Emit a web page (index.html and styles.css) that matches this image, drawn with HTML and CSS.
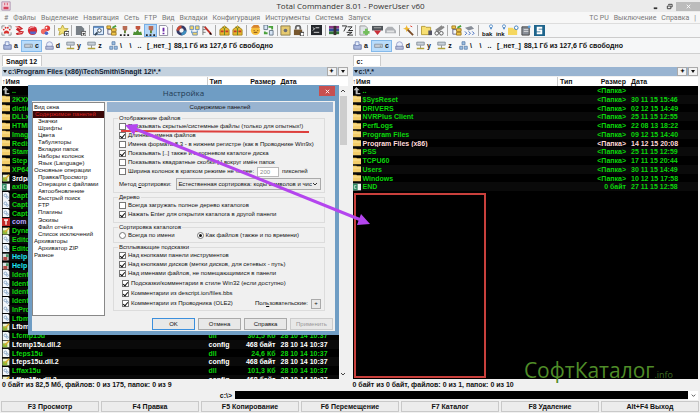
FILE: index.html
```html
<!DOCTYPE html>
<html lang="ru">
<head>
<meta charset="utf-8">
<title>Total Commander 8.01 - PowerUser v60</title>
<link rel="stylesheet" href="styles.css">
</head>
<body>
<svg class="defs" aria-hidden="true">
  <symbol id="paw" viewBox="0 0 12 12"><path d="M1 4V1h3M8 1h3v3M11 8v3H8M4 11H1V8" fill="none" stroke="#888"/><path d="M3 9c0-2 1.500-3 3-3s3 1 3 3c-1 1-2 0-3 0s-2 1-3 0z" fill="#d8312e"/><circle cx="3" cy="5" r="1" fill="#d8312e"/><circle cx="5" cy="3" r="1" fill="#d8312e"/><circle cx="7.500" cy="3" r="1" fill="#d8312e"/><circle cx="9.500" cy="5" r="1" fill="#d8312e"/></symbol>
  <symbol id="ribbon" viewBox="0 0 12 12"><path d="M1 2l5-1 4 3-4 2 5 1-2 3-6 1-1-2 4-1-4-3 2-2z" fill="#c8262c"/><path d="M3 2l4 2M5 9l4-1" stroke="#ffb0a8"/></symbol>
  <symbol id="ball" viewBox="0 0 12 12"><circle cx="6" cy="6" r="5" fill="#d62b35"/><path d="M3 7h7l-1 3H4z" fill="#5566c8"/><path d="M3 4c1-2 3-2 5-2" stroke="#fff" fill="none"/></symbol>
  <symbol id="pills" viewBox="0 0 12 12"><circle cx="8" cy="3.500" r="3" fill="#e23b3b"/><circle cx="4" cy="7" r="3" fill="#ef6a62"/><circle cx="7" cy="9" r="2" fill="#4d63c9"/><circle cx="7" cy="3" r="1" fill="#fff"/></symbol>
  <symbol id="star" viewBox="0 0 12 12"><path d="M5 0l2 4 4 0-3 3 1 4-4-2-4 2 1-4-3-3h4z" fill="#f5e37a" stroke="#b7a640"/><path d="M7 7h5v5H7z" fill="#fff" stroke="#333"/><path d="M8 9h3l-1.500 2z" fill="#222"/></symbol>
  <symbol id="doc" viewBox="0 0 12 12"><path d="M1 1h6l3 3v7H1z" fill="#777f86"/><path d="M7 7h5v5H7z" fill="#eee" stroke="#555"/><path d="M8 9h3l-1.500 2z"/></symbol>
  <symbol id="view" viewBox="0 0 12 12"><path d="M.500 1.500h11v9H.500z" fill="#dcecff" stroke="#4c6b93"/><path d="M1 2h10v1H1z" fill="#3b78c4"/><circle cx="7" cy="6" r="2" fill="#fff" stroke="#345"/><path d="M5 8l-3 3" stroke="#345" stroke-width="2"/></symbol>
  <symbol id="tree" viewBox="0 0 12 12"><path d="M2 3v7h5M2 5h5" fill="none" stroke="#668"/><path d="M1 1h4v3H1zM6 4h5v3H6zM6 8h5v3H6z" fill="#f1c84b" stroke="#a37c20"/><path d="M7 3l4-2" stroke="#4a9f3a" stroke-width="2"/></symbol>
  <symbol id="plug" viewBox="0 0 12 12"><path d="M4 1h5v4l-2 2-3-2z" fill="#b86c55"/><path d="M6.500 6v3" stroke="#5b7f31" stroke-width="2"/><path d="M1 11h2M5 11h2M9 11h2" stroke="#222" stroke-width="2"/></symbol>
  <symbol id="people" viewBox="0 0 12 12"><path d="M4 1h5v3l-2 2-3-2z" fill="#c2553f"/><path d="M1 11l1-4 2 1 2-3 2 3 2-1 1 4z" fill="#4c8f32"/></symbol>
  <symbol id="note" viewBox="0 0 12 12"><path d="M1.500.500h7l2 2v9h-9z" fill="#fff" stroke="#889"/><path d="M6 3v4M6 8.500v1.500" stroke="#6a28a8" stroke-width="2"/></symbol>
  <symbol id="wheel" viewBox="0 0 12 12"><circle cx="6" cy="6" r="4" fill="none" stroke="#333a66" stroke-width="3"/><path d="M2 6a4 4 0 0 1 4-4" fill="none" stroke="#cc4a34" stroke-width="3"/><path d="M10 6a4 4 0 0 1-4 4" fill="none" stroke="#3c8fc0" stroke-width="3"/></symbol>
  <symbol id="sync" viewBox="0 0 12 12"><path d="M1 1h4v4H1zM7 1h4v4H7zM4 8h5v3H4z" fill="#f2d568" stroke="#6d8fb5"/><path d="M3 6v3M9 6v2" stroke="#3481c8"/></symbol>
  <symbol id="pen" viewBox="0 0 12 12"><path d="M1 1v10M1 2h3M1 5h3M1 8h3" stroke="#777" fill="none"/><path d="M3 2l7 8" stroke="#c02f26" stroke-width="2"/><path d="M9 8l2 3-3-1z"/></symbol>
  <symbol id="pack" viewBox="0 0 12 12"><path d="M1 5l5-4 5 4v6H1z" fill="#e6b62d" stroke="#a8841f"/><path d="M4 2l2 2 2-2M6 4v7" stroke="#578631" fill="none"/><path d="M2 6h3v2H2zM7 6h3v2H7z" fill="#c23c2c"/></symbol>
  <symbol id="face" viewBox="0 0 12 12"><circle cx="6" cy="6" r="5" fill="#f5bd3b"/><path d="M1 3h10l-2-3H4z" fill="#d6842e"/><path d="M4 6h1M8 6h1M4 8h4" stroke="#734610"/></symbol>
  <symbol id="swap" viewBox="0 0 12 12"><path d="M1 0h4v5H1zM7 6h4v5H7z" fill="#d7e5f6" stroke="#678"/><path d="M6 2h4v3M5 9H2V7" fill="none" stroke="#49a13a" stroke-width="2"/></symbol>
  <symbol id="safe" viewBox="0 0 12 12"><path d="M1 1h10v10H1z" fill="#e6ca70" stroke="#8b7b4a"/><circle cx="6" cy="6" r="2" fill="#6b6c74"/></symbol>
  <symbol id="lock" viewBox="0 0 12 12"><path d="M3 5V3c0-3 5-3 5 0v2" fill="none" stroke="#666" stroke-width="2"/><path d="M1 5h9v6H1z" fill="#77572e"/><path d="M8 8h4v4H8z" fill="#fff" stroke="#333"/></symbol>
  <symbol id="term" viewBox="0 0 12 12"><path d="M0 0h12v11H0z" fill="#25282c"/><path d="M2 3l2 1-2 2M5 3h4M3 8h6" stroke="#ddd" fill="none"/></symbol>
  <symbol id="rar" viewBox="0 0 12 12"><path d="M0 1h11v3H0z" fill="#8b3a83"/><path d="M0 4h11v3H0z" fill="#344d9c"/><path d="M0 7h11v3H0z" fill="#34763a"/><path d="M5 1v10h3V1z" fill="#392f31"/></symbol>
  <symbol id="seven" viewBox="0 0 12 12"><path d="M0 1h5L2 7M6 2h5L7 6h5M5 8h6l-5 3h6" fill="none" stroke="#222"/></symbol>
  <symbol id="plus" viewBox="0 0 12 12"><path d="M1 1h6l2 2v8H1z" fill="#dfe3e6" stroke="#999"/><path d="M8 4v7M4.500 8h7" stroke="#73bd5c" stroke-width="3"/></symbol>
  <symbol id="down" viewBox="0 0 12 12"><path d="M0 1h12v5H0z" fill="#50555a"/><path d="M2 6h8l-4 5z" fill="#c92e37"/><path d="M2 3h8" stroke="#aaa"/></symbol>
  <symbol id="cloud" viewBox="0 0 12 12"><path d="M0 9V5l3-3h5l4 4v3z" fill="#aeb1b5"/><path d="M2 6h8v2H2z" fill="#e2e3e4"/></symbol>
  <symbol id="wand" viewBox="0 0 12 12"><path d="M3 3l8 8" stroke="#7a4c27" stroke-width="2"/><path d="M4 0l1 3 3 1-3 1-1 3-1-3-3-1 3-1z" fill="#efb72f"/><path d="M8 1l2 1" stroke="#d32"/></symbol>
  <symbol id="folder" viewBox="0 0 12 12"><path d="M0 1h5l1 1h6v9H0z" fill="#f3cd6a"/><path d="M0 4h12v1H0z" fill="#fff0b0"/></symbol>
  <symbol id="foldplus" viewBox="0 0 12 12"><path d="M.500 1.500h4l1 1h5v8h-10z" fill="#f7df72" stroke="#b59a33"/><path d="M8 6h4v5H8z" fill="#556" /></symbol>
  <symbol id="find" viewBox="0 0 12 12"><path d="M2 6l7-5M4 7l7-5" stroke="#888" stroke-width="2"/><circle cx="3" cy="9" r="2" fill="none" stroke="#555"/><circle cx="8" cy="9" r="2" fill="none" stroke="#555"/></symbol>
  <symbol id="arrows" viewBox="0 0 12 12"><path d="M1 3l7-2 3 3-6 2z" fill="#888e98"/><path d="M1 7l2 2-2 2M5 7l2 2-2 2M9 7l2 2-2 2" stroke="#3a66bd" fill="none"/></symbol>
  <symbol id="badge" viewBox="0 0 12 12"><circle cx="8" cy="3" r="2" fill="#fff" stroke="#3779bd"/><path d="M8 5v2" stroke="#3779bd" stroke-width="2"/></symbol>
  <symbol id="foldkey" viewBox="0 0 12 12"><path d="M0 3h5l1 1h4v7H0z" fill="#f5d75f"/><circle cx="9" cy="3" r="2" fill="#fff" stroke="#3779bd"/></symbol>
  <symbol id="note2" viewBox="0 0 12 12"><path d="M1 2h8v9H1z" fill="#8a9099" stroke="#444"/><path d="M3 5h5M3 7h5" stroke="#ddd"/><circle cx="9" cy="2" r="1.500" fill="#5aa0e0"/></symbol>
  <symbol id="snag" viewBox="0 0 12 12"><path d="M0 0h12v12H0z" fill="#1d648c"/><path d="M9 3H4v3h4v3H3" fill="none" stroke="#fff" stroke-width="2"/></symbol>
  <symbol id="floppy" viewBox="0 0 12 12"><path d="M1 5h10v6H1z" fill="#aab8de" stroke="#5c6b9c"/><path d="M3 1h5v5H3z" fill="#e8eefa" stroke="#6a7fb5"/></symbol>
  <symbol id="hdd" viewBox="0 0 14 12"><path d="M1 4h12v5H1z" fill="#c7ccd3" stroke="#76808d"/><path d="M9 7h2" stroke="#477"/></symbol>
  <symbol id="cd" viewBox="0 0 12 12"><circle cx="6" cy="5" r="4" fill="#e9eefc" stroke="#8791c0"/><path d="M1 7h10v4H1z" fill="#b9c0dc" stroke="#6c77a6"/></symbol>
  <symbol id="net" viewBox="0 0 12 12"><path d="M1 1.500h10v4H1z" fill="#c9d0d8" stroke="#77828e"/><path d="M6 6v4" stroke="#777"/><path d="M1 10h10" stroke="#b3a33c" stroke-width="2"/></symbol>
  <symbol id="lan" viewBox="0 0 12 12"><path d="M4 1h4v4H4zM1 7h4v4H1zM7 7h4v4H7z" fill="#9dbfe2" stroke="#557ca8"/></symbol>
  <symbol id="up" viewBox="0 0 12 12"><path d="M5 0l5 5H7v4h4v2H4V5H1z" fill="#bbb"/></symbol>
  <symbol id="dll" viewBox="0 0 12 12"><path d="M1 0h8l2 2v10H1z" fill="#f2f6fa"/><circle cx="5" cy="5" r="2" fill="none" stroke="#6890b8"/><circle cx="8" cy="8" r="1.500" fill="none" stroke="#6890b8"/></symbol>
  <symbol id="cfg" viewBox="0 0 12 12"><path d="M1 1h10v10H1z" fill="#eef2d0"/><path d="M1 5h7v6H1z" fill="#8bb83a"/><path d="M4 8l7-7" stroke="#dca92c" stroke-width="2"/></symbol>
  <symbol id="exe" viewBox="0 0 12 12"><path d="M0 1h12v10H0z" fill="#f5f5f5"/><path d="M0 1h7v10H0z" fill="#2f8a62"/><path d="M5 4H2v4h3" stroke="#fff" fill="none"/></symbol>
  <symbol id="tt" viewBox="0 0 12 12"><path d="M0 0h12v12H0z" fill="#c22a2a"/><path d="M3 3h6M6 3v7" stroke="#fff" stroke-width="2"/></symbol>
  <symbol id="hlp" viewBox="0 0 12 12"><path d="M1 1h9v10H1z" fill="#d9dfe0"/><path d="M2 6h6v5H2z" fill="#b24b45"/><path d="M6 2h4v4H6z" fill="#4c9a6a"/></symbol>
</svg>

<div class="app">
  <header class="titlebar">
    <svg class="logo" viewBox="0 0 12 12"><path d="M1 1h10v10H1z" fill="#f4d5dc" stroke="#a88fae"/><path d="M3 7h6v3H3zM4 2h1v3H4zM7 2h1v3H7z" fill="#d4405c"/></svg>
    <h1>Total Commander 8.01 - PowerUser v60</h1>
    <div class="winbtns">
      <button aria-label="Свернуть"><svg viewBox="0 0 8 8"><path d="M2 6h4" stroke="#333" stroke-width="2"/></svg></button>
      <button aria-label="Развернуть"><svg viewBox="0 0 8 8"><path d="M1.500 3.500h4v3h-4zM3 2.500V1.500h4v3H6" fill="none" stroke="#333"/></svg></button>
      <button class="x" aria-label="Закрыть"><svg viewBox="0 0 8 8"><path d="M2 2l4 4M6 2L2 6" stroke="#fff"/></svg></button>
    </div>
  </header>
  <nav class="menu">
    <a href="#">#</a><a href="#">Файлы</a><a href="#">Выделение</a><a href="#">Навигация</a><a href="#">Сеть</a><a href="#">FTP</a><a href="#">Вид</a><a href="#">Вкладки</a><a href="#">Конфигурация</a><a href="#">Инструменты</a><a href="#">Система</a><a href="#">Запуск</a>
    <span class="fill"></span>
    <a href="#">TC PU</a><a href="#">Выключение</a><a href="#">Справка</a><span>|</span>
  </nav>
  <div class="toolbar"><div class="tools" id="tools"></div></div>
  <div class="drives">
    <div class="drivebar"></div>
    <div class="drivebar"></div>
  </div>
  <main class="panels">
    <section class="panel">
      <div class="tabs"><button class="tab">Snagit 12</button></div>
      <div class="path"><b><i class="tri"></i>c:\Program Files (x86)\TechSmith\Snagit 12\*.*</b><button aria-label="Избранное">✦</button><button aria-label="История"><i class="tri"></i></button></div>
      <div class="files">
        <table>
          <thead><tr><th><i class="arr">↑</i>Имя</th><th>Тип</th><th>Размер</th><th>Дата</th></tr></thead>
          <tbody id="left"></tbody>
        </table>
        <div class="scroll"><svg viewBox="0 0 8 8"><path d="M2 5l2-2 2 2" fill="none" stroke="#444"/></svg><i></i><svg viewBox="0 0 8 8"><path d="M2 3l2 2 2-2" fill="none" stroke="#444"/></svg></div>
      </div>
      <p class="status">0 байт из 82,5 Мб, файлов: 0 из 175, папок: 0 из 9</p>
    </section>
    <section class="panel">
      <div class="tabs"><button class="tab">c:</button></div>
      <div class="path active"><b><i class="tri"></i>c:\*.*</b><button aria-label="Избранное">✦</button><button aria-label="История"><i class="tri"></i></button></div>
      <div class="files">
        <table>
          <thead><tr><th><i class="arr">↑</i>Имя</th><th>Тип</th><th>Размер</th><th>Дата</th></tr></thead>
          <tbody id="right"></tbody>
        </table>
        <div class="frame"></div>
      </div>
      <p class="status">0 байт из 0 байт, файлов: 0 из 1, папок: 0 из 10</p>
    </section>
  </main>
  <div class="cmd"><label for="cmd">c:\&gt;</label><input id="cmd"><button aria-label="Список команд"><svg viewBox="0 0 8 8"><path d="M2 3l2 2 2-2" fill="none" stroke="#444"/></svg></button></div>
  <footer class="keys"><button>F3 Просмотр</button><button>F4 Правка</button><button>F5 Копирование</button><button>F6 Перемещение</button><button>F7 Каталог</button><button>F8 Удаление</button><button>Alt+F4 Выход</button></footer>
</div>

<div class="dialog" role="dialog" aria-labelledby="dt">
  <div class="dtitle"><h2 id="dt">Настройка</h2><button aria-label="Закрыть"><svg viewBox="0 0 8 8"><path d="M2 2l4 4M6 2L2 6" stroke="#fff"/></svg></button></div>
  <div class="dbody">
    <div class="dmain">
      <ul class="pages">
        <li>Вид окна</li><li class="on sub">Содержимое панелей</li><li class="sub">Значки</li><li class="sub">Шрифты</li><li class="sub">Цвета</li><li class="sub">Табуляторы</li><li class="sub">Вкладки папок</li><li class="sub">Наборы колонок</li><li class="sub">Язык (Language)</li><li>Основные операции</li><li class="sub">Правка/Просмотр</li><li class="sub">Операции с файлами</li><li class="sub">Автообновление</li><li class="sub">Быстрый поиск</li><li class="sub">FTP</li><li class="sub">Плагины</li><li class="sub">Эскизы</li><li class="sub">Файл отчёта</li><li class="sub">Список исключений</li><li>Архиваторы</li><li class="sub">Архиватор ZIP</li><li>Разное</li>
      </ul>
      <div class="opts">
        <h3>Содержимое панелей</h3>
        <fieldset>
          <legend>Отображение файлов</legend>
          <label><input type="checkbox">Показывать скрытые/системные файлы (только для опытных!)</label>
          <label><input type="checkbox" checked>Длинные имена файлов</label>
          <label><input type="checkbox">Имена формата 8.3 - в нижнем регистре (как в Проводнике Win9x)</label>
          <label><input type="checkbox" checked>Показывать [..] также и в корневом каталоге диска</label>
          <label><input type="checkbox">Показывать квадратные скобки [ ] вокруг имён папок</label>
          <div class="line"><label><input type="checkbox">Ширина колонок в кратком режиме не более:</label><input class="num" aria-label="Пикселей" value="200" disabled><span>пикселей</span></div>
          <div class="method"><label for="sort">Метод <u>с</u>ортировки:</label><div class="pick"><select id="sort"><option>Естественная сортировка: коды символов и чис</option></select><svg viewBox="0 0 8 8"><path d="M2 3l2 2 2-2" fill="none" stroke="#333"/></svg></div></div>
        </fieldset>
        <fieldset class="tree">
          <legend>Дерево</legend>
          <label><input type="checkbox">Всегда загружать полное дерево каталогов</label>
          <label><input type="checkbox" checked>Нажать Enter для открытия каталога в другой панели</label>
        </fieldset>
        <fieldset>
          <legend>Сортировка каталогов</legend>
          <div class="radios"><label><input type="radio" name="s">Всегда по имени</label><label><input type="radio" name="s" checked>Как файлов (также и по времени)</label></div>
        </fieldset>
        <fieldset class="hints">
          <legend>Всплывающие подсказки</legend>
          <label><input type="checkbox" checked>Над кнопками панели инструментов</label>
          <label><input type="checkbox" checked>Над кнопками дисков (метки дисков, для сетевых - путь)</label>
          <label><input type="checkbox" checked>Над именами файлов, не помещающимися в панели</label>
          <div class="nested">
            <label><input type="checkbox" checked>Подсказки/комментарии в стиле Win32 (если доступно)</label>
            <label><input type="checkbox" checked>Комментарии из descript.ion/files.bbs</label>
            <div class="line last"><label><input type="checkbox" checked>Комментарии из Проводника (OLE2)</label><span>Пол<u>ь</u>зовательские:</span><button aria-label="Пользовательские">+</button></div>
          </div>
        </fieldset>
      </div>
    </div>
    <div class="dbtns"><button class="ok">OK</button><button>Отмена</button><button>Справка</button><button disabled>Применить</button></div>
  </div>
</div>

<svg class="marks" viewBox="0 0 700 413" aria-hidden="true">
  <path d="M121 131L309 132" stroke="#dd3f3c" stroke-width="2"/>
  <path d="M133 128L361 220" stroke="#b445ee" stroke-width="3"/>
  <path d="M125 125l13-1-4 11zM370 224l-13 1 4-11z" fill="#b445ee"/>
</svg>
<div class="brand">СофтКаталог<small>.info</small></div>
<script src="app.js"></script>
</body>
</html>
```
FILE: styles.css
```css
* { box-sizing: border-box; }
body { margin: 0; height: 100vh; overflow: hidden; position: relative; background: #f0f0f0; color: #111; font: bold 7px/9px "Liberation Sans", sans-serif; }
button, input, select { font: inherit; color: inherit; margin: 0; padding: 0; }
button { border: 0; background: none; display: flex; align-items: center; justify-content: center; }
h1, h2, h3, p, ul { margin: 0; padding: 0; list-style: none; }
a { color: inherit; text-decoration: none; }
svg { display: block; }
.defs { position: absolute; width: 0; height: 0; }
.app { height: 100%; display: flex; flex-direction: column; }

.titlebar { height: 12px; display: flex; align-items: center; background: #ebebeb; padding-left: 1px; }
.logo { width: 10px; height: 10px; }
.titlebar h1 { flex: 1; text-align: center; padding-left: 42px; font: 8px/12px "Open Sans", sans-serif; color: #333; }
.winbtns { display: flex; }
.winbtns button { width: 14px; height: 9px; }
.winbtns svg { width: 7px; height: 7px; }
.winbtns .x { width: 24px; background: #bcbcbc; }
.menu { height: 11px; display: flex; gap: 5px; align-items: center; padding: 0 4px; background: #f7f7f7; color: #777; font: 7px/10px Roboto, sans-serif; }
.fill { flex: 1; }
.toolbar { height: 15px; background: #f5f6f7; border-top: 1px solid #ddd; border-bottom: 1px solid #ccc; }
.tools { width: 78%; height: 100%; display: flex; justify-content: space-between; align-items: center; }
.tools i { width: 1px; height: 11px; background: #aaa; }
.tools div { display: flex; }
.tools button { width: 13px; height: 13px; position: relative; }
.tools svg { width: 11px; height: 11px; }
.tools .sel { background: #b5d7f8; outline: 1px solid #77aee6; outline-offset: -1px; }
.tools .cap { align-items: flex-end; line-height: 6px; font-size: 6px; }
.tools .cap svg { position: absolute; top: 0; right: 0; width: 9px; height: 9px; }
.drives { height: 16px; display: grid; grid-template-columns: 1fr 1fr; background: #f6f7f8; border-bottom: 1px solid #d0d0d0; }
.drivebar { display: flex; align-items: center; }
.drivebar button { width: 21px; height: 12px; gap: 2px; }
.drivebar button.sel { background: #b9dcfb; outline: 1px solid #84b9ea; outline-offset: -1px; }
.drivebar svg { width: 9px; height: 9px; }
.drivebar button.d { width: 9px; }
.drivebar span { padding-left: 3px; }

.panels { flex: 1; min-height: 0; display: grid; grid-template-columns: 1fr 1fr; gap: 5px; padding: 0 2px; }
.panel { min-width: 0; min-height: 0; display: flex; flex-direction: column; }
.tabs { height: 12px; display: flex; align-items: flex-end; }
.tab { height: 11px; min-width: 28px; padding: 0 4px 0 3px; justify-content: flex-start; background: #fff; border: 1px solid #ccc; border-bottom: 0; }
.path { height: 9px; margin: 1px 0; display: flex; background: #c3d1de; gap: 1px; }
.path.active { background: #99b4d1; }
.path b { flex: 1; display: flex; align-items: center; gap: 1px; color: #123; padding-left: 1px; }
.path button { width: 10px; background: #f3f3f3; border: 1px solid #aaa; font-size: 6px; }
.tri { border: 2px solid transparent; border-top: 3px solid #111; border-bottom: 0; }
.files { flex: 1; min-height: 0; display: grid; grid-template-columns: 1fr; position: relative; background: #000; }
table { min-height: 0; display: flex; flex-direction: column; }
thead { display: block; background: #fff; height: 9px; }
tbody { flex: 1; min-height: 0; overflow: hidden; display: grid; grid-template-rows: repeat(33, 1fr) 4px; color: #0bd60b; }
tr { display: grid; grid-template-columns: 1fr 31px 41px 67px; min-height: 0; overflow: hidden; align-items: center; }
tbody tr:nth-child(34) { align-items: start; }
tbody tr:nth-child(even) { background: #0a0a0a; }
th, td { padding: 0; text-align: left; white-space: nowrap; line-height: 9px; }
th:nth-child(2) { border-left: 1px solid #ccc; padding-left: 2px; margin-left: -2px; }
th:nth-child(3), td:nth-child(3) { text-align: right; padding-right: 5px; }
td:first-child { display: flex; align-items: center; gap: 2px; }
td svg { width: 8px; height: 8px; }
.arr { font-style: normal; }
tr.w { color: #fff; }
tr.p { color: #ffd9d9; }
tr.c { color: #1fe6f2; }
tr.v { color: #b9a8ff; }
.scroll { position: absolute; right: 0; top: 9px; bottom: 0; width: 9px; background: #f0f0f0; display: flex; flex-direction: column; align-items: center; }
.scroll svg { width: 8px; height: 10px; }
.scroll i { width: 7px; height: 49px; background: #cdcdcd; }
.scroll svg:last-child { margin-top: auto; }
.frame { position: absolute; left: 1px; top: 116px; width: 132px; bottom: 1px; border: 2px solid #c9403c; }
.status { height: 11px; line-height: 11px; }
.cmd { height: 11px; display: flex; align-items: center; padding: 0 2px 1px 0; }
.cmd label { width: 235px; text-align: right; padding-right: 3px; }
.cmd input { flex: 1; min-width: 0; height: 8px; border: 0; background: #000; color: #fff; }
.cmd button { width: 10px; height: 9px; background: #fff; }
.cmd svg { width: 7px; height: 7px; }
.keys { height: 12px; display: grid; grid-template-columns: repeat(7, 1fr); gap: 2px; padding: 0 1px 1px; }
.keys button { border: 1px solid #c9c9c9; background: #ececec; }

.dialog { position: absolute; left: 28px; top: 85px; width: 311px; height: 250px; padding: 0 4px 4px; background: #6f9dc4; font: 6px/9px "Liberation Sans", sans-serif; display: flex; flex-direction: column; }
.dtitle { height: 16px; display: flex; align-items: flex-start; }
.dtitle h2 { flex: 1; text-align: center; padding-left: 16px; font: 8px/16px "Open Sans", sans-serif; color: #223a52; }
.dtitle button { width: 16px; height: 10px; margin-top: 1px; background: #c75050; }
.dtitle svg { width: 7px; height: 7px; }
.dbody { flex: 1; min-height: 0; background: #f0f0f0; padding: 1px 2px 1px 0; display: flex; flex-direction: column; gap: 2px; }
.dmain { flex: 1; min-height: 0; display: flex; gap: 2px; }
.pages { width: 73px; background: #fff; border: 1px solid #888; display: grid; grid-template-rows: repeat(30, 1fr); padding-top: 1px; }
.pages li { line-height: 7px; padding-left: 1px; white-space: nowrap; min-height: 0; }
.pages .sub { padding-left: 5px; }
.pages .on { background: #3a0808; color: #d82020; padding-left: 2px; }
.opts { flex: 1; min-width: 0; }
.opts h3 { height: 10px; margin-bottom: 2px; background: #99b4d1; font: inherit; line-height: 10px; text-align: center; }
fieldset { margin: 0 8px 0 6px; padding: 0 3px 2px 5px; min-width: 0; border: 1px solid #dcdcdc; }
fieldset.tree { padding-bottom: 3px; }
legend { padding: 0 1px; margin-left: -1px; line-height: 8px; }
fieldset label { height: 9px; display: flex; align-items: center; gap: 2px; white-space: nowrap; }
input[type="checkbox"], input[type="radio"] { appearance: none; flex: none; width: 7px; height: 7px; border: 1px solid #777; background: #fff; display: grid; place-items: center; }
input[type="radio"] { border-radius: 50%; }
input[type="checkbox"]:checked::before { content: ""; width: 2px; height: 4px; border: solid #111; border-width: 0 1px 1px 0; transform: rotate(40deg); }
input[type="radio"]:checked::before { content: ""; width: 3px; height: 3px; border-radius: 50%; background: #111; }
.line, .method, .radios { display: flex; align-items: center; }
.line { height: 9px; gap: 3px; }
.num { width: 22px; height: 10px; border: 1px solid #bbb; background: #fff; color: #888; padding-left: 2px; }
.method { margin-top: 2px; height: 12px; gap: 5px; }
.method label { gap: 0; white-space: pre; }
.pick { flex: 1; min-width: 0; position: relative; }
.pick select { appearance: none; display: block; width: 100%; height: 12px; border: 1px solid #aaa; border-radius: 0; background: #eaeaea; padding: 0 8px 0 1px; }
.pick svg { position: absolute; right: 2px; top: 2px; width: 8px; height: 8px; pointer-events: none; }
.radios { gap: 22px; }
.nested { display: grid; gap: 1px; padding: 1px 0 0 3px; }
.last span { margin-left: auto; }
.last button { width: 10px; height: 10px; border: 1px solid #aaa; background: #e8e8e8; }
.dbtns { display: flex; justify-content: flex-end; gap: 3px; }
.dbtns button { width: 43px; height: 12px; border: 1px solid #aaa; background: #e8e8e8; }
.dbtns .ok { border-color: #3c8fdc; }
.dbtns button:disabled { color: #999; border-color: #ccc; }

.marks { position: absolute; left: 0; top: 0; width: 700px; height: 413px; pointer-events: none; fill: none; }
.brand { position: absolute; right: 27px; bottom: 24px; font: 21px/28px "Open Sans", sans-serif; color: #4f8c28; }
.brand small { font-size: 9px; color: #3f6f22; }
```
FILE: app.js
```js
const icon = id => `<svg><use href="#${id}"/></svg>`;

const groups = [
  ["paw", "ribbon", "ball", "pills"], ["star"], ["doc"],
  ["view", "tree", "plug", "people", "plug*", "note"], ["wheel", "sync", "pen"],
  ["pack", "pack"], ["face", "swap"], ["safe", "lock"], ["term"], ["rar", "seven"],
  ["plus", "down", "cloud"], ["wand"], ["foldplus", "find"], ["tree", "arrows"],
  ["badge:bak", "badge:ink", "foldkey", "note2", "snag"]
];
document.getElementById("tools").innerHTML = groups.map(g => "<div>" + g.map(n => {
  const [id, cap] = n.replace("*", "").split(":");
  return `<button class="${n.endsWith("*") ? "sel" : cap ? "cap" : ""}" aria-label="${id}">${icon(id)}${cap || ""}</button>`;
}).join("") + "</div>").join("<i></i>");

const drives = [["floppy", "a"], ["hdd", "c"], ["cd", "d"], ["net", "y"], ["net", "z"], ["lan", "\\"]];
document.querySelectorAll(".drivebar").forEach(bar => {
  bar.innerHTML = drives.map(([i, n]) => `<button class="${n === "c" ? "sel" : ""}">${icon(i)}${n}</button>`).join("") +
    `<button class="d">\\</button><button class="d">..</button><span>[_нет_]</span><span>88,1 Гб из 127,6 Гб свободно</span>`;
});

const row = ([ic, name, type = "", size = "", date = "", cls = ""]) =>
  `<tr class="${cls}"><td>${icon(ic)}${name}</td><td>${type}</td><td>${size}</td><td>${date}</td></tr>`;
// Rows below the dialog carry full details; the others show only the start of the name.
const t = "28 10 14 10:37";
const dir = n => ["folder", n];
const dll = (n, s) => s ? ["dll", n, "dll", s, t] : ["dll", n];
const cfg = n => ["cfg", n, "config", "468 байт", t, "w"];
document.getElementById("left").innerHTML = [
  ["up", ".."], dir("2KXX"), dir("dictio"), dir("DLLx"), dir("HTML"), dir("Image"), dir("Redis"), dir("Stam"), dir("Step"), dir("XP64"),
  ["cfg", "3rdpa", "", "", "", "w"], ["exe", "axlib"], dll("Capt"), dll("Capt"), dll("Capt"), ["tt", "com", "", "", "", "v"], ["cfg", "Dyna"],
  dll("Edito"), dll("Edito"), ["hlp", "Help", "", "", "", "c"], ["hlp", "Help", "", "", "", "c"],
  dll("Ident"), dll("Ident"), dll("Ident"), dll("Ident"), dll("InPro"), dll("Lfbm"), ["cfg", "Lfbm", "", "", "", "w"],
  dll("Lfcmp15u", "301,5 Кб"), cfg("Lfcmp15u.dll.2"), dll("Lfeps15u", "24,6 Кб"), cfg("Lfeps15u.dll.2"), dll("Lffax15u", "101,3 Кб"), cfg("Lffax15u.dll.2")
].map(row).join("");
const rdir = (n, d, c) => ["folder", n, "", "&lt;Папка&gt;", d, c];
document.getElementById("right").innerHTML = [
  ["up", "..", "", "&lt;Папка&gt;"], rdir("$SysReset", "30 11 15 15:46"), rdir("DRIVERS", "02 12 15 14:49"), rdir("NVRPlus Client", "25 11 15 12:55"),
  rdir("PerfLogs", "22 08 13 18:22"), rdir("Program Files", "09 12 15 14:40"), rdir("Program Files (x86)", "14 12 15 20:08", "p"),
  rdir("PSS", "25 11 15 12:59"), rdir("TCPU60", "17 11 15 20:44"), rdir("Users", "30 11 15 14:49"), rdir("Windows", "10 12 15 17:58"),
  ["exe", "END", "", "0 байт", "27 11 15 12:58"]
].map(row).join("");
```
